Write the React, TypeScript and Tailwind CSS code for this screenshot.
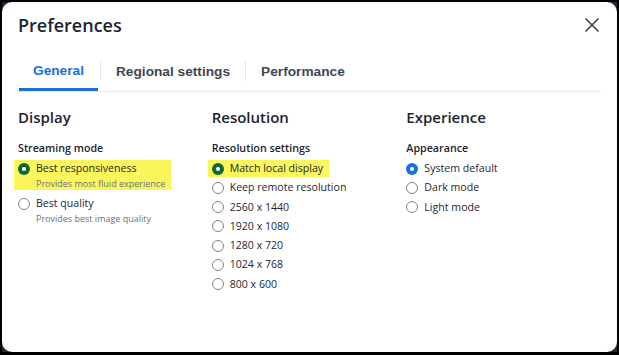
import React from "react";

type Opt = { label: string; sub?: string; selected?: boolean; hl?: boolean };

function Radio({ selected, color }: { selected?: boolean; color: string }) {
  if (selected) {
    return (
      <span
        className="flex h-[12px] w-[12px] shrink-0 items-center justify-center rounded-full"
        style={{ backgroundColor: color }}
      >
        <span className="h-[4px] w-[4px] rounded-full bg-white" />
      </span>
    );
  }
  return <span className="h-[12px] w-[12px] shrink-0 rounded-full border border-[#7b8594] bg-white" />;
}

function Option({ o, color }: { o: Opt; color: string }) {
  return (
    <div className={`-ml-[4px] flex self-start pl-[4px] pr-[6px] ${o.hl ? "bg-[#fbf65c]" : ""}`}>
      <div className="flex h-[17px] items-center">
        <Radio selected={o.selected} color={color} />
      </div>
      <div className="ml-[6px] flex flex-col">
        <span className="text-[10.6px] leading-[17px] text-[#1f2733]">{o.label}</span>
        {o.sub && <span className="text-[9px] leading-[13px] text-[#6b7280]">{o.sub}</span>}
      </div>
    </div>
  );
}

function Column({
  title,
  sub,
  opts,
  color,
  gap,
  w,
}: {
  title: string;
  sub: string;
  opts: Opt[];
  color: string;
  gap: string;
  w: string;
}) {
  return (
    <div className={`flex flex-col ${w}`}>
      <h3 className="text-[15px] font-semibold leading-[22px] text-[#1c2430]">{title}</h3>
      <p className="mt-[12px] text-[10.7px] font-semibold leading-[16px] text-[#1c2430]">{sub}</p>
      <div className={`mt-[4px] flex flex-col ${gap}`}>
        {opts.map((o) => (
          <Option key={o.label} o={o} color={color} />
        ))}
      </div>
    </div>
  );
}

export default function App() {
  const green = "#0c6b3c";
  const blue = "#1570e0";
  return (
    <div className="h-[355px] w-[619px] bg-black p-[2px] pb-[3px]" style={{ fontFamily: '"Open Sans", "Noto Sans", sans-serif' }}>
      <div className="h-full w-full bg-[#1c2a3a]">
        <div className="flex h-full w-full flex-col rounded-[10px] bg-white">
          <div className="flex h-[46px] items-center justify-between pl-[16px] pr-[18px]">
            <h2 className="text-[18px] font-semibold text-[#1c2430]">Preferences</h2>
            <svg width="14" height="14" viewBox="0 0 14 14" className="text-[#3d4655]">
              <path d="M1 1L13 13M13 1L1 13" stroke="currentColor" strokeWidth="1.7" strokeLinecap="round" />
            </svg>
          </div>
          <div
            className="mx-[16px] flex items-start border-b border-[#e3e6ea] text-[13.7px] font-bold"
            style={{ fontFamily: '"Liberation Sans", Arial, sans-serif' }}
          >
            <div className="ml-[1px] flex h-[43px] items-center border-b-[3px] border-[#1a6fd6] px-[14px] pt-[6px] text-[#1a6fd6]">
              General
            </div>
            <div className="ml-[2px] mt-[12px] h-[21px] w-px bg-[#e3e6ea]" />
            <div className="flex h-[43px] items-center px-[15px] pt-[6px] text-[#3e4756]">Regional settings</div>
            <div className="mt-[12px] h-[21px] w-px bg-[#e3e6ea]" />
            <div className="flex h-[43px] items-center px-[15px] pt-[6px] text-[#3e4756]">Performance</div>
          </div>
          <div className="flex px-[16px] pt-[14px]">
            <Column
              w="w-[194px]"
              title="Display"
              sub="Streaming mode"
              color={green}
              gap="gap-[5px]"
              opts={[
                { label: "Best responsiveness", sub: "Provides most fluid experience", selected: true, hl: true },
                { label: "Best quality", sub: "Provides best image quality" },
              ]}
            />
            <Column
              w="w-[195px]"
              title="Resolution"
              sub="Resolution settings"
              color={green}
              gap="gap-[2.3px]"
              opts={[
                { label: "Match local display", selected: true, hl: true },
                { label: "Keep remote resolution" },
                { label: "2560 x 1440" },
                { label: "1920 x 1080" },
                { label: "1280 x 720" },
                { label: "1024 x 768" },
                { label: "800 x 600" },
              ]}
            />
            <Column
              w="w-[195px]"
              title="Experience"
              sub="Appearance"
              color={blue}
              gap="gap-[2.3px]"
              opts={[
                { label: "System default", selected: true },
                { label: "Dark mode" },
                { label: "Light mode" },
              ]}
            />
          </div>
        </div>
      </div>
    </div>
  );
}
